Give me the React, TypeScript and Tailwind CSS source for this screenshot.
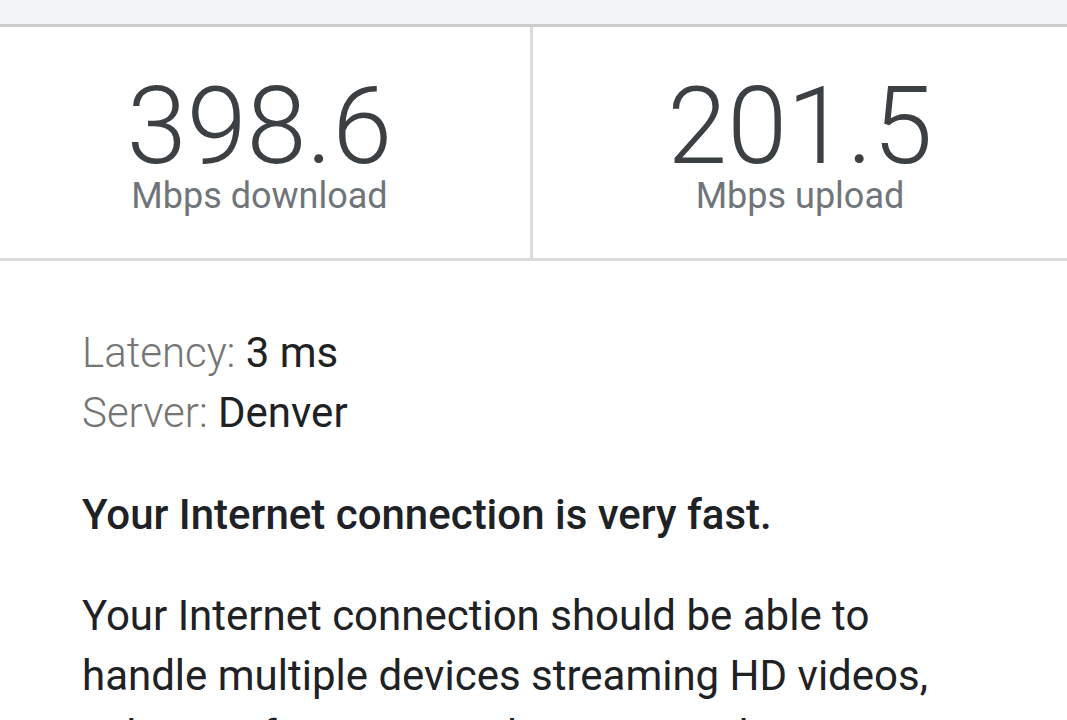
export default function App() {
  return (
    <div className="w-[1067px] h-[720px] overflow-hidden bg-white font-['Roboto',sans-serif]">
      <div className="h-[24px] bg-[#f1f3f4]" />
      <div className="h-[3px] bg-[#cbcccd]" />

      <div className="flex h-[234px] border-b-[3px] border-[#dcdcdc]">
        <div className="w-[533px] border-r-[3px] border-[#dcdcdc] pr-[11px] pt-[48px] flex flex-col items-center">
          <div className="text-[108px] leading-[103px] font-light text-[#3c4043]">398.6</div>
          <div className="text-[36px] leading-[36px] text-[#70757a]">Mbps download</div>
        </div>
        <div className="flex-1 pt-[48px] flex flex-col items-center">
          <div className="text-[108px] leading-[103px] font-light text-[#3c4043]">201.5</div>
          <div className="text-[36px] leading-[36px] text-[#70757a]">Mbps upload</div>
        </div>
      </div>

      <div className="pl-[82px] pr-[82px] pt-[62px] text-[42px] leading-[60px]">
        <div>
          <span className="font-light text-[#757575]">Latency: </span>
          <span className="text-[#202124]">3 ms</span>
        </div>
        <div>
          <span className="font-light text-[#757575]">Server: </span>
          <span className="text-[#202124]">Denver</span>
        </div>

        <p className="mt-[42px] font-medium text-[#202124]">Your Internet connection is very fast.</p>

        <p className="mt-[41px] text-[#202124]">
          Your Internet connection should be able to handle multiple devices streaming HD videos, video conferencing and gaming at the same time.
        </p>
      </div>
    </div>
  );
}
